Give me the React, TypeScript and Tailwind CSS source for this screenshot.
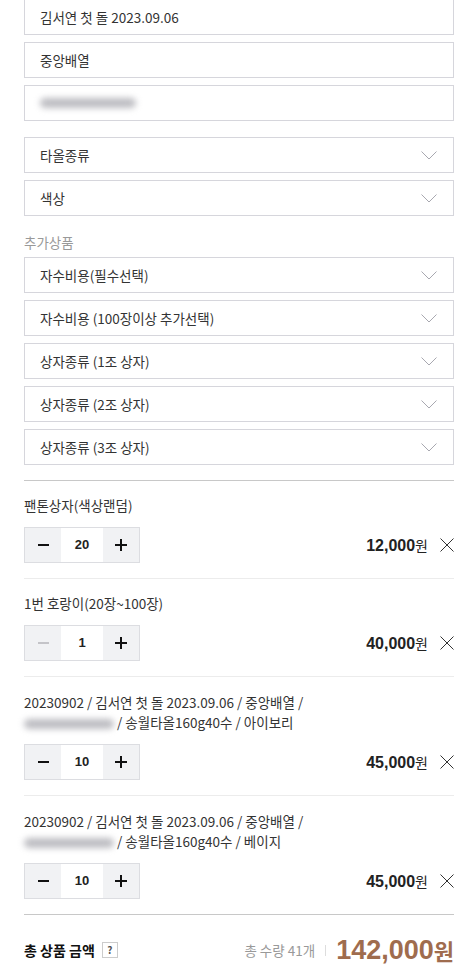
import { Fragment } from 'react'

const kr = "font-['Noto_Sans_CJK_KR','Noto_Sans',sans-serif]"
const num = "font-['Liberation_Sans','Noto_Sans_CJK_KR',sans-serif]"

const Chevron = () => (
  <svg width="16" height="9" viewBox="0 0 16 9" fill="none" className="shrink-0">
    <path d="M0.5 0.5 L8 8 L15.5 0.5" stroke="#a8a8b0" strokeWidth="1" />
  </svg>
)

const Close = () => (
  <svg width="14" height="14" viewBox="0 0 14 14" fill="none" className="shrink-0">
    <path d="M0.5 0.5 L13.5 13.5 M13.5 0.5 L0.5 13.5" stroke="#333" strokeWidth="1" />
  </svg>
)

const Blur = ({ w = 'w-[96px]' }: { w?: string }) => (
  <span className={`inline-block h-[10px] ${w} rounded-full bg-[#bdbdc2] blur-[3px] align-middle`} />
)

const InputBox = ({ children }: { children: React.ReactNode }) => (
  <div className="flex h-9 items-center border border-[#d6d6dc] bg-white pl-[15px] text-[13.5px] text-[#333]">
    {children}
  </div>
)

const SelectBox = ({ label }: { label: string }) => (
  <div className="flex h-9 items-center justify-between border border-[#d6d6dc] bg-white pl-[15px] pr-4 text-[13.5px] text-[#333]">
    <span>{label}</span>
    <Chevron />
  </div>
)

const Qty = ({ value, disabled }: { value: number; disabled?: boolean }) => (
  <div className="flex h-9 w-[116px] border border-[#dcdde1]">
    <button
      type="button"
      className="flex w-9 items-center justify-center bg-[#f1f2f4]"
    >
      <span className={`block h-[2px] w-[11px] ${disabled ? 'bg-[#c4c4c8]' : 'bg-[#111]'}`} />
    </button>
    <div className={`flex flex-1 items-center justify-center bg-white text-[13px] font-bold text-[#222] ${num}`}>
      {value}
    </div>
    <button
      type="button"
      className="relative flex w-9 items-center justify-center bg-[#f1f2f4]"
    >
      <span className="absolute h-[2px] w-[12px] bg-[#111]" />
      <span className="absolute h-[12px] w-[2px] bg-[#111]" />
    </button>
  </div>
)

type Item = {
  title: React.ReactNode
  qty: number
  price: string
  minDisabled?: boolean
  multi?: boolean
}

const items: Item[] = [
  { title: '팬톤상자(색상랜덤)', qty: 20, price: '12,000' },
  { title: '1번 호랑이(20장~100장)', qty: 1, price: '40,000', minDisabled: true },
  {
    title: (
      <>
        20230902 / 김서연 첫 돌 2023.09.06 / 중앙배열 /
        <br />
        <Blur w="w-[90px]" /> / 송월타올160g40수 / 아이보리
      </>
    ),
    qty: 10,
    price: '45,000',
    multi: true,
  },
  {
    title: (
      <>
        20230902 / 김서연 첫 돌 2023.09.06 / 중앙배열 /
        <br />
        <Blur w="w-[90px]" /> / 송월타올160g40수 / 베이지
      </>
    ),
    qty: 10,
    price: '45,000',
    multi: true,
  },
]

export default function App() {
  return (
    <div className={`min-h-screen bg-white pl-6 pr-5 ${kr}`}>
      <div className="-mt-px flex flex-col gap-[7px]">
        <InputBox>김서연 첫 돌 2023.09.06</InputBox>
        <InputBox>중앙배열</InputBox>
        <InputBox>
          <Blur />
        </InputBox>
      </div>

      <div className="mt-4 flex flex-col gap-[7px]">
        <SelectBox label="타올종류" />
        <SelectBox label="색상" />
      </div>

      <div className="mt-4 mb-[5px] text-[13.5px] leading-5 text-[#999]">추가상품</div>

      <div className="flex flex-col gap-[7px]">
        <SelectBox label="자수비용(필수선택)" />
        <SelectBox label="자수비용 (100장이상 추가선택)" />
        <SelectBox label="상자종류 (1조 상자)" />
        <SelectBox label="상자종류 (2조 상자)" />
        <SelectBox label="상자종류 (3조 상자)" />
      </div>

      <div className="mt-[15px] border-t border-[#c8c8c8]">
        {items.map((item, i) => (
          <Fragment key={i}>
            {i > 0 && <div className="border-t border-[#ececec]" />}
            <div className={item.multi ? 'pt-[15px] pb-[15px]' : 'pt-[14px] pb-[15px]'}>
              <div className="text-[13.5px] leading-5 text-[#333]">{item.title}</div>
              <div className="mt-[12px] flex items-center justify-between">
                <Qty value={item.qty} disabled={item.minDisabled} />
                <div className="flex items-center gap-[12px]">
                  <span className="text-[#222]">
                    <span className={`text-[16px] font-bold ${num}`}>{item.price}</span>
                    <span className="text-[14px]">원</span>
                  </span>
                  <Close />
                </div>
              </div>
            </div>
          </Fragment>
        ))}
      </div>

      <div className="flex h-[52px] items-end justify-between border-t border-[#c8c8c8]">
        <div className="flex h-8 items-center gap-[7px]">
          <span className="text-[14px] font-bold text-[#111]">총 상품 금액</span>
          <span className="flex h-4 w-4 items-center justify-center border border-[#ccc] text-[10px] font-bold leading-none text-[#555]">
            ?
          </span>
        </div>
        <div className="flex h-8 items-center">
          <span className="text-[13.5px] text-[#999]">총 수량 41개</span>
          <span className="mx-[10px] h-[11px] w-px bg-[#ddd]" />
          <span className="flex items-center text-[#9f6c4e]">
            <span className={`text-[27px] font-bold leading-none ${num}`}>142,000</span>
            <span className="text-[22px] font-bold leading-none">원</span>
          </span>
        </div>
      </div>
    </div>
  )
}
